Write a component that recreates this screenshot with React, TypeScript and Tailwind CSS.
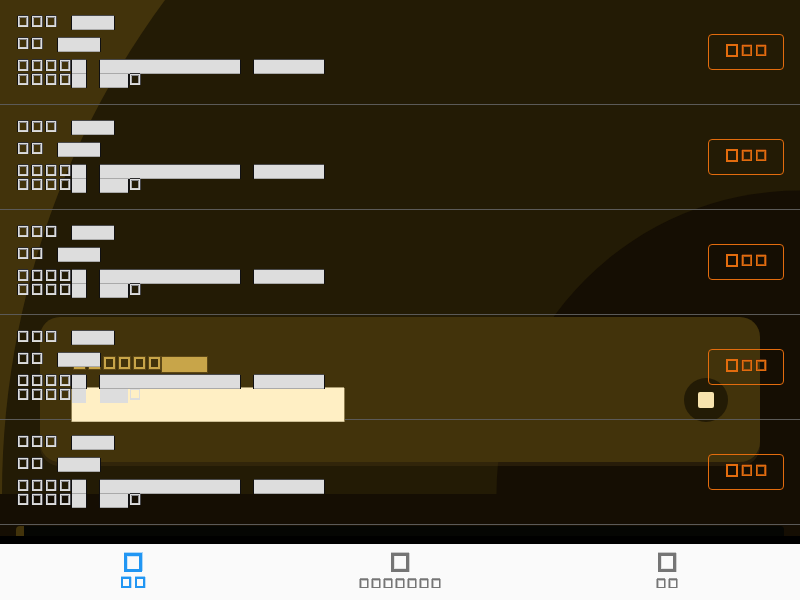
import React from "react";

const plain =
  "border border-[#dddddd] shadow-[-1px_0_#151515,1px_0_#48484c,0_-1px_#2c2c2e,inset_0_-1px_#d0d0d0,inset_0_1px_#808083,inset_1px_0_#a8a8aa,inset_-1px_0_#98989a]";
const onCream = "border border-[#dddddd] shadow-[inset_0_-1px_#dddddd]";

/** One 14px-wide character cell with a hollow placeholder glyph. */
function Hollow({ tone = plain }: { tone?: string }) {
  return (
    <span className="block h-[14px] w-[14px] shrink-0 pl-[2px]">
      <span className={"block h-[11px] w-[10px] " + tone} />
    </span>
  );
}

function Hollows({ count, tone }: { count: number; tone?: string }) {
  return (
    <>
      {Array.from({ length: count }, (_, i) => (
        <Hollow key={i} tone={tone} />
      ))}
    </>
  );
}

/** A run of solid placeholder characters. */
function Solid({ width, top = true, flat = false }: { width: string; top?: boolean; flat?: boolean }) {
  const edge = flat
    ? ""
    : top
      ? "border-b border-[#aaaaaa] shadow-[-1px_0_#101012,1px_0_#101012,0_-1px_#49494a]"
      : "border-b border-[#aaaaaa] shadow-[-1px_0_#101012,1px_0_#101012]";
  return <span className={"block h-[14px] shrink-0 bg-[#dddddd] " + width + " " + edge} />;
}

function Gap() {
  return <span className="block w-[14px] shrink-0" />;
}

function Row({ overCream = false }: { overCream?: boolean }) {
  return (
    <div className="flex h-[105px] items-start justify-between px-4">
      <div className="flex flex-col pt-4">
        <div className="flex h-[22px]">
          <Hollows count={3} />
          <Gap />
          <Solid width="w-[42px]" />
        </div>
        <div className="flex h-[22px]">
          <Hollows count={2} />
          <Gap />
          <Solid width="w-[42px]" />
        </div>
        <div className="flex h-[14px]">
          <Hollows count={4} />
          <Solid width="w-[14px]" />
          <Gap />
          <Solid width="w-[140px]" />
          <Gap />
          <Solid width="w-[70px]" />
        </div>
        <div className="flex h-[14px]">
          <Hollows count={4} />
          <Solid width="w-[14px]" top={false} flat={overCream} />
          <Gap />
          <Solid width="w-[28px]" top={false} flat={overCream} />
          <Hollows count={1} tone={overCream ? onCream : plain} />
        </div>
      </div>
      <button className="mt-[34px] flex h-9 w-[76px] items-start rounded-[4px] border border-[#e36c0e] pl-[17px] pt-[9px]">
        <span className="block h-[13px] w-3 border-2 border-[#e36c0e]" />
        <span className="ml-1 mt-px block h-[11px] w-[10px] border border-[#e36c0e] shadow-[-1px_0_#5a2c0a,0_-1px_#5a2c0a,inset_1px_1px_#a8520d,inset_-1px_-1px_#a8520d]" />
        <span className="ml-1 mt-px block h-[11px] w-[10px] border border-[#e36c0e] shadow-[1px_0_#5a2c0a,0_-1px_#5a2c0a,inset_1px_1px_#a8520d,inset_-1px_-1px_#a8520d]" />
      </button>
    </div>
  );
}

function Backdrop() {
  return (
    <div className="absolute inset-0 overflow-hidden bg-black">
      <svg className="absolute left-0 top-0" width="800" height="536" viewBox="0 0 800 536">
        <defs>
          <clipPath id="hero">
            <rect width="800" height="494" />
          </clipPath>
        </defs>
        <rect width="800" height="536" fill="#150e03" />
        <g clipPath="url(#hero)">
          <rect width="800" height="494" fill="#42330b" />
          <circle cx="832" cy="494" r="830" fill="#231b05" />
          <circle cx="800" cy="494" r="303.5" fill="#150e03" />
        </g>
        <path d="M16 536V530Q16 526 20 526H40V536Z" fill="#42330b" />
        <path d="M24 526H780Q784 526 784 530V536H24Z" fill="#050603" />
      </svg>
      <section className="absolute left-10 top-[317px] h-[145px] w-[720px] rounded-[20px] bg-[#42330b] shadow-[0_4px_0_rgba(83,64,22,0.3)]">
        <div className="flex h-full items-start justify-between px-8">
          <div className="flex pt-10">
            {[0, 1, 2, 3, 4, 5].map((i) => (
              <span key={i} className="block w-[15px] pl-[2px]">
                <span className="block h-3 w-[11px] border-2 border-[#c8a549] shadow-[0_0_0_1px_#5c4716]" />
              </span>
            ))}
            <span className="block h-[15px] w-[45px] bg-[#c8a549] shadow-[0_0_0_1px_#5c4716]" />
          </div>
          <div className="mt-[61px] flex h-11 w-11 items-center justify-center rounded-full bg-[#231b05]">
            <div className="h-4 w-4 rounded-[2px] bg-[#f7e3ae]" />
          </div>
        </div>
      </section>
    </div>
  );
}

function Tab({ active = false, children }: { active?: boolean; children: React.ReactNode }) {
  return (
    <div className="flex flex-1 flex-col items-center pt-[9px]">
      <span
        className={
          active
            ? "block h-[19px] w-[18px] border-[3px] border-[#2196f3] shadow-[1px_-1px_#add7f8,0_-1px_#add7f8,inset_1px_1px_#c9e4fa]"
            : "block h-[19px] w-[18px] border-[3px] border-[#757575] shadow-[0_-1px_#c8c8c8,1px_0_#d0d0d0,inset_1px_-1px_#e2e2e2]"
        }
      />
      {children}
    </div>
  );
}

function SmallGlyphs({ count }: { count: number }) {
  return (
    <div className="mt-[7px] flex gap-1">
      {Array.from({ length: count }, (_, i) => (
        <span
          key={i}
          className="block h-[9px] w-2 border border-[#757575] shadow-[0_-1px_#999999,-1px_0_#b4b4b4,1px_0_#b4b4b4,inset_1px_0_#c4c4c4,inset_0_1px_#c4c4c4]"
        />
      ))}
    </div>
  );
}

export default function App() {
  return (
    <div className="flex h-[600px] w-[800px] flex-col overflow-hidden font-['Roboto',sans-serif]">
      <main className="relative min-h-0 flex-1">
        <Backdrop />
        <div className="absolute inset-x-0 top-0">
          {[0, 1, 2, 3, 4].map((i) => (
            <div key={i} className="h-[105px] border-b border-[#5b5a58]" />
          ))}
        </div>
        <div className="absolute left-[72px] top-[388px] h-[34px] w-[272px] border-b border-[#cdbf95] bg-[#ffefc4] shadow-[0_-1px_#aa9b70,-1px_0_#8c7c50,1px_0_#8c7c50]" />
        <div className="relative flex flex-col">
          <Row />
          <Row />
          <Row />
          <Row overCream />
          <Row />
        </div>
      </main>
      <nav className="flex h-14 shrink-0 bg-[#fafafa]">
        <Tab active>
          <div className="mt-[5px] flex gap-1">
            {[0, 1].map((i) => (
              <span
                key={i}
                className="block h-[11px] w-[10px] border-2 border-[#2196f3] shadow-[0_-1px_#9dd0f8,1px_0_#b8dcf9]"
              />
            ))}
          </div>
        </Tab>
        <Tab>
          <SmallGlyphs count={7} />
        </Tab>
        <Tab>
          <SmallGlyphs count={2} />
        </Tab>
      </nav>
    </div>
  );
}
